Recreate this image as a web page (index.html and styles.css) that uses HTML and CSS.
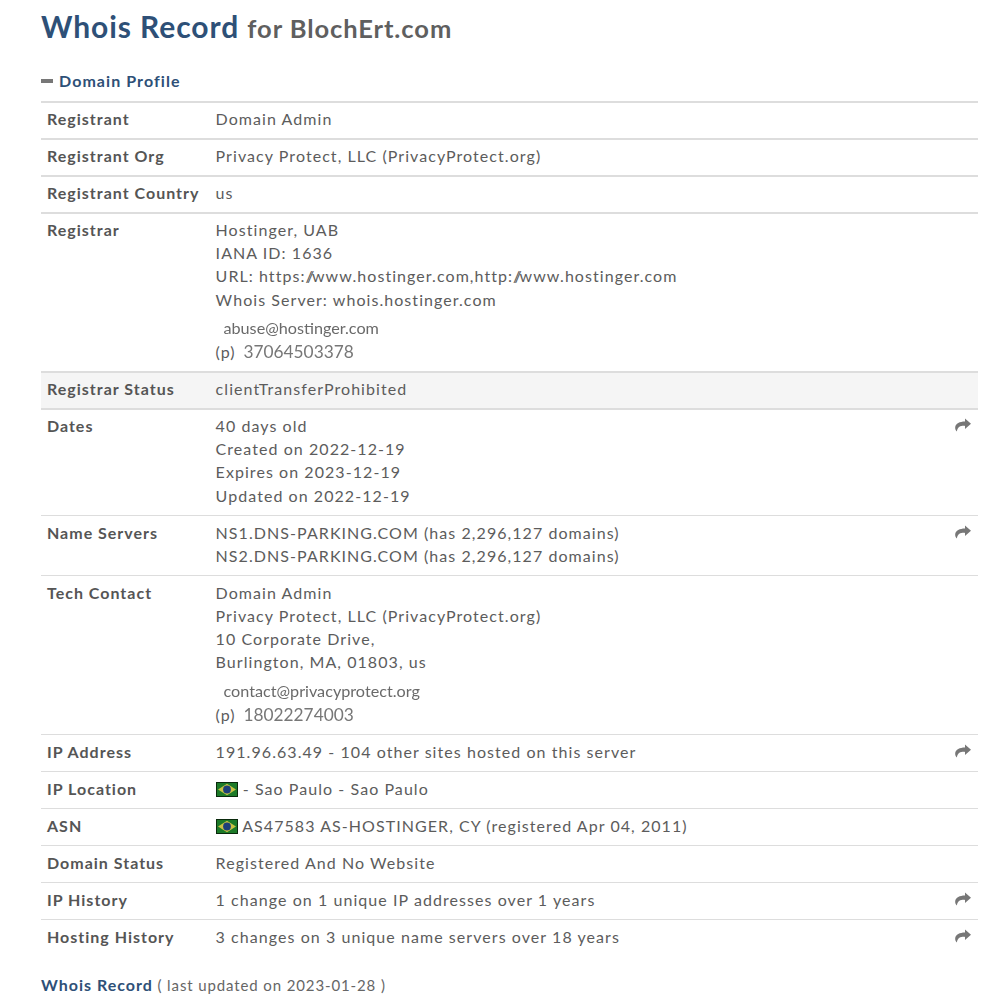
FILE: index.html
```html
<!DOCTYPE html>
<html lang="en">
<head>
<meta charset="utf-8">
<title>Whois Record for BlochErt.com</title>
<link rel="stylesheet" href="styles.css">
</head>
<body>
<svg class="defs" width="0" height="0" aria-hidden="true">
  <defs>
    <symbol id="share" viewBox="0 0 16 14">
      <path d="M10 0.5 L16 5.7 L10 11 V7.9 C5.6 7.7 3 8.6 1.8 13.4 C0.6 12.6 0 10.6 0.2 9 C0.7 5.3 4.6 3.5 10 3.4 Z"/>
    </symbol>
    <symbol id="flag-br" viewBox="0 0 22 15">
      <rect width="22" height="15" fill="#0a2a0c"/>
      <rect x="1" y="1" width="20" height="13" fill="#1c7a28"/>
      <path d="M11 1.8 L20 7.5 L11 13.2 L2 7.5 Z" fill="#c9c243"/>
      <circle cx="11" cy="7.5" r="3.9" fill="#1d3f78"/>
    </symbol>
  </defs>
</svg>
<main class="page">
  <h1 class="title">Whois Record <small class="title-sub">for BlochErt.com</small></h1>
  <h2 class="section"><span class="dash"></span>Domain Profile</h2>
  <div class="table">
    <div class="row thick"><div class="label">Registrant</div><div class="value">Domain Admin</div></div>
    <div class="row thick"><div class="label">Registrant Org</div><div class="value">Privacy Protect, LLC (PrivacyProtect.org)</div></div>
    <div class="row thick"><div class="label">Registrant Country</div><div class="value">us</div></div>
    <div class="row thick">
      <div class="label">Registrar</div>
      <div class="value">
        Hostinger, UAB<br>IANA ID: 1636<br>URL: https:<span class="slashes">//</span>www.hostinger.com,http:<span class="slashes">//</span>www.hostinger.com<br>Whois Server: whois.hostinger.com
        <div class="email">abuse@hostinger.com</div>
        <div class="phone"><span class="phone-tag">(p)</span><span class="phone-num">37064503378</span></div>
      </div>
    </div>
    <div class="row thick shaded"><div class="label">Registrar Status</div><div class="value">clientTransferProhibited</div></div>
    <div class="row thick">
      <div class="label">Dates</div>
      <div class="value">40 days old<br>Created on 2022-12-19<br>Expires on 2023-12-19<br>Updated on 2022-12-19</div>
      <svg class="share"><use href="#share"/></svg>
    </div>
    <div class="row">
      <div class="label">Name Servers</div>
      <div class="value">NS1.DNS-PARKING.COM (has 2,296,127 domains)<br>NS2.DNS-PARKING.COM (has 2,296,127 domains)</div>
      <svg class="share"><use href="#share"/></svg>
    </div>
    <div class="row">
      <div class="label">Tech Contact</div>
      <div class="value">
        Domain Admin<br>Privacy Protect, LLC (PrivacyProtect.org)<br>10 Corporate Drive,<br>Burlington, MA, 01803, us
        <div class="email">contact@privacyprotect.org</div>
        <div class="phone"><span class="phone-tag">(p)</span><span class="phone-num">18022274003</span></div>
      </div>
    </div>
    <div class="row">
      <div class="label">IP Address</div>
      <div class="value">191.96.63.49 - 104 other sites hosted on this server</div>
      <svg class="share"><use href="#share"/></svg>
    </div>
    <div class="row"><div class="label">IP Location</div><div class="value"><svg class="flag"><use href="#flag-br"/></svg> - Sao Paulo - Sao Paulo</div></div>
    <div class="row"><div class="label">ASN</div><div class="value"><svg class="flag"><use href="#flag-br"/></svg> AS47583 AS-HOSTINGER, CY (registered Apr 04, 2011)</div></div>
    <div class="row"><div class="label">Domain Status</div><div class="value">Registered And No Website</div></div>
    <div class="row">
      <div class="label">IP History</div>
      <div class="value">1 change on 1 unique IP addresses over 1 years</div>
      <svg class="share"><use href="#share"/></svg>
    </div>
    <div class="row">
      <div class="label">Hosting History</div>
      <div class="value">3 changes on 3 unique name servers over 18 years</div>
      <svg class="share"><use href="#share"/></svg>
    </div>
  </div>
  <p class="footer"><strong class="footer-title">Whois Record</strong> ( last updated on 2023-01-28 )</p>
</main>
</body>
</html>
```
FILE: styles.css
```css
html, body {
  margin: 0;
  padding: 0;
  background: #fff;
}
body {
  font-family: Lato, "Open Sans", sans-serif;
  font-size: 16px;
  line-height: 23.2px;
  letter-spacing: 1px;
  color: #555;
  overflow: hidden;
}
.defs {
  position: absolute;
}
.page {
  padding: 0 28px 0 41px;
}
.title {
  margin: 0;
  padding-top: 7px;
  font-size: 30px;
  line-height: 38px;
  font-weight: 700;
  letter-spacing: 0.92px;
  color: #2e5077;
}
.title-sub {
  font-size: 25.5px;
  letter-spacing: 0.92px;
  color: #5f5f5f;
}
.section {
  display: flex;
  align-items: center;
  margin: 0;
  padding-top: 22px;
  padding-bottom: 9px;
  font-size: 16px;
  line-height: 23px;
  font-weight: 700;
  letter-spacing: 1.07px;
  color: #2e5077;
}
.dash {
  width: 12px;
  height: 4px;
  margin-right: 6px;
  background: #777;
}
.table {
  display: flex;
  flex-direction: column;
}
.row {
  display: flex;
  padding: 5px 6px 7.8px;
  border-top: 1px solid #ddd;
  position: relative;
}
.thick {
  padding: 4px 6px 7.8px;
  border-top: 2px solid #ddd;
}
.shaded {
  background: #f5f5f5;
}
.label {
  flex: 0 0 168.6px;
  font-weight: 700;
}
.value {
  flex: 1;
  letter-spacing: 1.06px;
  color: #5c5c5c;
}
.slashes {
  letter-spacing: -2.25px;
}
.email {
  padding: 5px 0 0 7.9px;
  font-size: 16.2px;
  letter-spacing: 0;
  color: #6a6a6a;
  filter: blur(0.35px);
}
.phone {
  display: flex;
  align-items: baseline;
  padding-top: 1px;
  letter-spacing: 1px;
}
.phone-tag {
  width: 27.9px;
}
.phone-num {
  font-size: 17.3px;
  letter-spacing: 0;
  color: #777;
  filter: blur(0.35px);
}
.share {
  position: absolute;
  top: 9px;
  right: 7px;
  width: 16px;
  height: 14px;
  fill: #777;
}
.thick .share {
  top: 8px;
}
.flag {
  width: 22px;
  height: 15px;
  vertical-align: -2px;
  filter: blur(0.3px);
}
.footer {
  margin: 0;
  padding-top: 17px;
  font-size: 15px;
  letter-spacing: 0.88px;
  color: #666;
}
.footer-title {
  font-size: 16px;
  letter-spacing: 1px;
  color: #2e5077;
}
```
